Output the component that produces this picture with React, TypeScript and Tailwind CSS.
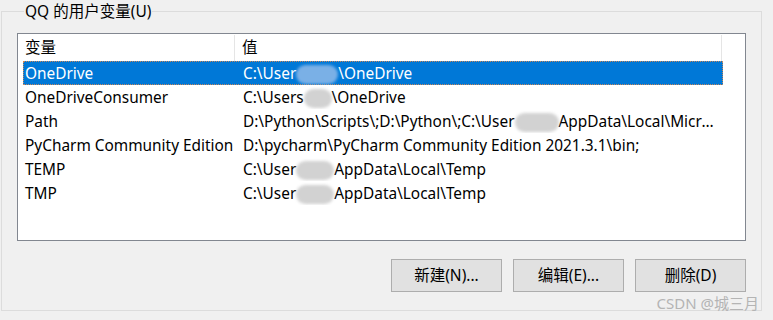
import React from "react";

type Part = string | { blob: number; tone?: "light" | "sel" };

interface Row {
  name: string;
  value: Part[];
}

const rows: Row[] = [
  { name: "OneDrive", value: ["C:\\User", { blob: 42, tone: "sel" }, "\\OneDrive"] },
  { name: "OneDriveConsumer", value: ["C:\\Users", { blob: 28 }, "\\OneDrive"] },
  {
    name: "Path",
    value: [
      "D:\\Python\\Scripts\\;D:\\Python\\;C:\\User",
      { blob: 44 },
      "AppData\\Local\\Microsoft\\WindowsApps;",
    ],
  },
  { name: "PyCharm Community Edition", value: ["D:\\pycharm\\PyCharm Community Edition 2021.3.1\\bin;"] },
  { name: "TEMP", value: ["C:\\User", { blob: 38 }, "AppData\\Local\\Temp"] },
  { name: "TMP", value: ["C:\\User", { blob: 38 }, "AppData\\Local\\Temp"] },
];

const font = "font-['Noto_Sans','Noto_Sans_CJK_SC',sans-serif]";

function Blob({ width, selected }: { width: number; selected?: boolean }) {
  return (
    <span
      className={`inline-block h-[19px] align-middle rounded-full blur-[1.5px] ${
        selected ? "bg-[#7ab0e6]" : "bg-[#d2d2d2]"
      }`}
      style={{ width }}
    />
  );
}

function Button({ label }: { label: string }) {
  return (
    <button className="w-[111px] h-[33px] bg-[#e1e1e1] border border-[#adadad] text-[15.5px] text-black">
      {label}
    </button>
  );
}

export default function App() {
  return (
    <div className={`relative w-[773px] h-[320px] bg-[#f0f0f0] overflow-hidden ${font}`}>
      <fieldset className="ml-[1px] w-[761px] h-[311px] border border-[#dcdcdc] pl-[15px] pr-[15px]">
        <legend className="ml-[7px] px-[1px] text-[15.5px] leading-[22px] text-black">QQ 的用户变量(U)</legend>

        <div className="mt-[11px] w-[729px] h-[208px] bg-white border border-[#828790]">
          {/* header */}
          <div className="flex h-[27px] pt-[1px] text-[15.5px] text-black">
            <div className="w-[217px] pl-[7px] border-r border-[#e5e5e5] flex items-center">变量</div>
            <div className="w-[487px] pl-[7px] border-r border-[#e5e5e5] flex items-center">值</div>
          </div>

          {rows.map((row, i) => {
            const selected = i === 0;
            return (
              <div
                key={row.name}
                className={`ml-[5px] w-[700px] h-[24px] pt-[1px] flex items-center text-[15.4px] ${
                  selected
                    ? "bg-[#0078d7] text-white outline outline-1 outline-dotted outline-[#c8875a] -outline-offset-1"
                    : "text-black"
                }`}
              >
                <div className="w-[212px] pl-[2px] whitespace-nowrap overflow-hidden">{row.name}</div>
                <div className="w-[488px] pl-[8px] pr-[4px] whitespace-nowrap overflow-hidden text-ellipsis">
                  {row.value.map((p, j) =>
                    typeof p === "string" ? (
                      <span key={j}>{p}</span>
                    ) : (
                      <Blob key={j} width={p.blob} selected={p.tone === "sel"} />
                    )
                  )}
                </div>
              </div>
            );
          })}
        </div>

        <div className="mt-[18px] w-[729px] flex justify-end gap-[11px]">
          <Button label="新建(N)..." />
          <Button label="编辑(E)..." />
          <Button label="删除(D)" />
        </div>
      </fieldset>

      <span className="absolute right-[14px] bottom-[6px] text-[15px] text-[#b4b4b4]">CSDN @城三月</span>
    </div>
  );
}
